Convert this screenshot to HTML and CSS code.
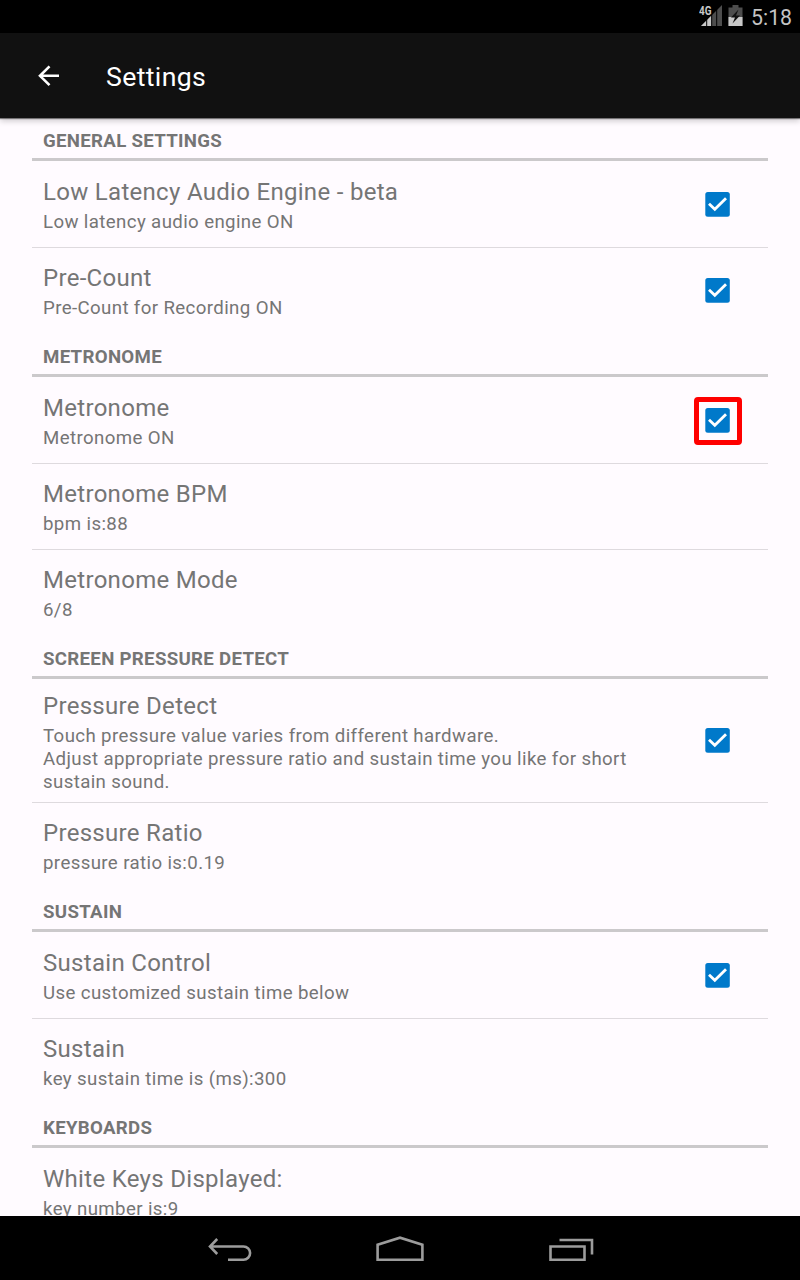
FILE: index.html
```html
<!DOCTYPE html>
<html lang="en">
<head>
<meta charset="utf-8">
<title>Settings</title>
<link rel="stylesheet" href="styles.css">
</head>
<body>
<svg class="defs" width="0" height="0">
  <symbol id="check" viewBox="0 0 26 26">
    <rect x="0.3" y="0" width="24.5" height="24.7" rx="2.5" fill="#0079ca"/>
    <path d="M4 11.8L9.8 17.3L21 6.3" fill="none" stroke="#fff" stroke-width="2.8"/>
  </symbol>
</svg>
<div class="screen">
  <div class="status">
    <svg class="status-icons" width="50" height="33" viewBox="0 0 50 33">
      <path d="M2 26L23 5V26Z" fill="#4d4d4d"/>
      <path d="M2 26L12.5 15.5V26Z" fill="#c8c8c8"/>
      <path d="M7.7 13V26M12.7 8V26M17.7 5V26" stroke="#000" stroke-width="1"/>
      <path d="M0 4H12V16H0Z" fill="#000"/>
      <text class="net" x="0" y="15" textLength="12.5" lengthAdjust="spacingAndGlyphs">4G</text>
      <path d="M33.5 5H39.5V7.5H43.5V26H29.5V7.5H33.5Z" fill="#4d4d4d"/>
      <path d="M29.5 17H43.5V26H29.5Z" fill="#c8c8c8"/>
      <path d="M39.5 9.5L32 17.5H36L33.5 23.5L41 15.5H37Z" fill="#111"/>
    </svg>
    <span class="clock">5:18</span>
  </div>
  <header class="bar">
    <svg class="back" width="22" height="22" viewBox="0 0 22 22"><path d="M21 10.8H2M11.5 1.4L2 10.8L11.5 20.2" fill="none" stroke="#fff" stroke-width="2.6"/></svg>
    <h1>Settings</h1>
  </header>
  <main class="list">
    <h2>GENERAL SETTINGS</h2>
    <div class="row"><div class="text"><div class="title">Low Latency Audio Engine - beta</div><div class="sub">Low latency audio engine ON</div></div><span class="box"><svg width="26" height="26"><use href="#check"/></svg></span></div>
    <div class="row last"><div class="text"><div class="title">Pre-Count</div><div class="sub">Pre-Count for Recording ON</div></div><span class="box"><svg width="26" height="26"><use href="#check"/></svg></span></div>
    <h2>METRONOME</h2>
    <div class="row"><div class="text"><div class="title">Metronome</div><div class="sub">Metronome ON</div></div><span class="box marked"><svg width="26" height="26"><use href="#check"/></svg></span></div>
    <div class="row"><div class="text"><div class="title">Metronome BPM</div><div class="sub">bpm is:88</div></div></div>
    <div class="row last"><div class="text"><div class="title">Metronome Mode</div><div class="sub">6/8</div></div></div>
    <h2>SCREEN PRESSURE DETECT</h2>
    <div class="row tall"><div class="text"><div class="title">Pressure Detect</div><div class="sub">Touch pressure value varies from different hardware.<br>Adjust appropriate pressure ratio and sustain time you like for short<br>sustain sound.</div></div><span class="box"><svg width="26" height="26"><use href="#check"/></svg></span></div>
    <div class="row last"><div class="text"><div class="title">Pressure Ratio</div><div class="sub">pressure ratio is:0.19</div></div></div>
    <h2>SUSTAIN</h2>
    <div class="row"><div class="text"><div class="title">Sustain Control</div><div class="sub">Use customized sustain time below</div></div><span class="box"><svg width="26" height="26"><use href="#check"/></svg></span></div>
    <div class="row last"><div class="text"><div class="title">Sustain</div><div class="sub">key sustain time is (ms):300</div></div></div>
    <h2>KEYBOARDS</h2>
    <div class="row last"><div class="text"><div class="title">White Keys Displayed:</div><div class="sub">key number is:9</div></div></div>
  </main>
  <nav class="nav">
    <svg width="800" height="64" viewBox="0 0 800 64" fill="none" stroke="#9c9c9c" stroke-width="2.6">
      <path d="M210 30.5H243.5A6.6 6.6 0 0 1 243.5 43.7H228M217.2 23L210 30.5L217.2 38"/>
      <path d="M377.6 43.7V28.8L400 21.7L422.4 28.8V43.7Z"/>
      <path d="M550.5 30.5H584.5V43.7H550.5ZM559.5 24H592V38.5"/>
    </svg>
  </nav>
</div>
</body>
</html>
```
FILE: styles.css
```css
*, *::after { box-sizing: border-box; }
body { margin: 0; font-family: Roboto, sans-serif; background: #fffbff; }
.defs { position: absolute; }
.screen { width: 800px; height: 1280px; display: flex; flex-direction: column; overflow: hidden; }
.status { flex: none; height: 33px; background: #000; display: flex; justify-content: flex-end; align-items: center; padding-right: 8px; }
.net { font-size: 12px; font-weight: 700; fill: #c8c8c8; }
.clock { width: 41px; margin-left: 2px; font-size: 21.3px; line-height: 33px; padding-top: 2px; color: #c4c4c4; white-space: nowrap; }
.bar { flex: none; height: 85px; background: #111; display: flex; align-items: center; padding-left: 38px; z-index: 1; box-shadow: 0 1px 1px rgba(0,0,0,.45), 0 3px 6px rgba(0,0,0,.2); }
.back { flex: none; }
.bar h1 { margin: 2px 0 0 46px; font-size: 26.67px; font-weight: 400; color: #fff; letter-spacing: 0.35px; }
.list { flex: 1; min-height: 0; overflow: hidden; padding: 0 32px; color: #757575; }
h2 { margin: 0 0 1px; height: 43px; border-bottom: 3px solid #cbc9cb; padding: 3px 11px 0; font-size: 18.67px; line-height: 40px; font-weight: 700; letter-spacing: 0.3px; }
.row { height: 86px; display: flex; align-items: center; justify-content: space-between; padding: 0 37px 0 11px; border-bottom: 1px solid #dedade; }
.row.tall { height: 123px; }
.row.last { border-bottom-color: transparent; }
.title { margin-bottom: 3px; font-size: 24px; line-height: 32px; letter-spacing: 0.3px; white-space: nowrap; }
.sub { font-size: 18.67px; line-height: 23px; letter-spacing: 0.38px; white-space: nowrap; }
.text { padding-top: 1px; }
.box { position: relative; display: flex; width: 26px; height: 26px; }
.marked::after { content: ""; position: absolute; left: -11px; top: -11px; width: 48px; height: 48px; border: 5px solid #f00; border-radius: 4px; }
.nav { flex: none; height: 64px; background: #000; }
.nav svg { display: block; }
```
